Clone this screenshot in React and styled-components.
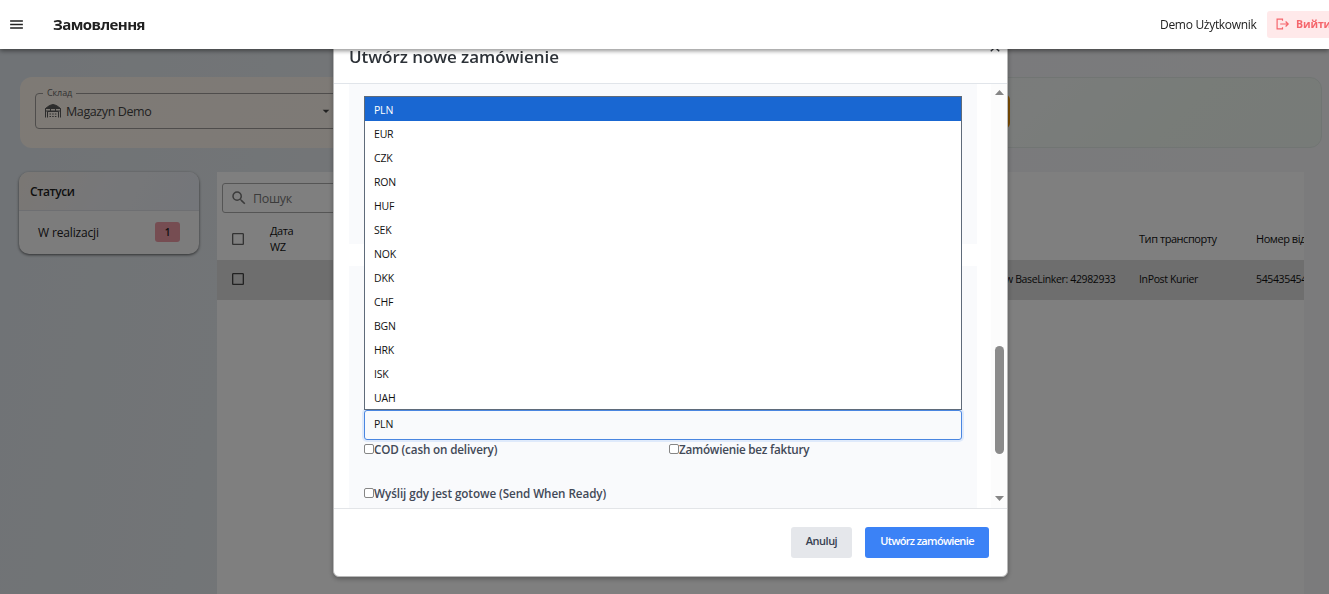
import React from "react";
import styled, { createGlobalStyle } from "styled-components";
import { MdMenu, MdSearch, MdArrowDropDown, MdCheckBoxOutlineBlank, MdClose } from "react-icons/md";

const GlobalStyle = createGlobalStyle`
  * { box-sizing: border-box; }
  svg { flex: none; }
  body {
    margin: 0;
    overflow: hidden;
    font-family: "Open Sans", "Noto Sans", sans-serif;
    color: #212121;
  }
`;

const Page = styled.div`
  height: 594px;
  display: flex;
  flex-direction: column;
  overflow: hidden;
  background: linear-gradient(100deg, #e0e6ec 0%, #e5eaee 20%, #f4f5f8 70%, #f7f7f9 100%);
`;

const TopBar = styled.header`
  height: 49px;
  flex: none;
  display: flex;
  align-items: center;
  padding-left: 8px;
  background: #fff;
  position: relative;
  z-index: 30;
  box-shadow: 0 2px 4px rgba(0, 0, 0, 0.3), 0 1px 6px rgba(0, 0, 0, 0.2);
`;

const PageTitle = styled.h1`
  flex: 1;
  margin: 0 0 2px 28px;
  font-size: 15px;
  font-weight: 700;
  letter-spacing: -0.55px;
`;

const UserName = styled.span`
  width: 107px;
  font-size: 12px;
  letter-spacing: -0.3px;
  white-space: nowrap;
`;

const LogoutButton = styled.button`
  width: 62px;
  height: 27px;
  display: flex;
  align-items: center;
  gap: 6px;
  padding: 0 0 2px 9px;
  border: 0;
  border-radius: 3px 0 0 3px;
  background: #ffe9ea;
  color: #f5666c;
  font: 700 10.5px "Open Sans", sans-serif;
  letter-spacing: -0.1px;
  white-space: nowrap;
  overflow: hidden;
`;

const Main = styled.main`
  flex: 1;
  min-height: 0;
  display: flex;
  flex-direction: column;
  padding: 28px 7px 0 20px;
`;

const Filters = styled.div`
  height: 71px;
  flex: none;
  display: flex;
  gap: 12px;
`;

const FilterCard = styled.div`
  flex: 1;
  padding: 16px 15px;
  border-radius: 12px;
  border: ${(p) => (p.$green ? "1px solid #e2eae6" : "0")};
  background: ${(p) =>
    p.$green
      ? "linear-gradient(135deg, #f5f6f8 0%, #f4f8f6 55%, #f0f8f1 75%, #eff6f0 100%)"
      : "linear-gradient(135deg, #fdf5eb, #faf4ee)"};
`;

const SelectField = styled.fieldset`
  height: 42px;
  margin: -6px 0 0;
  padding: 0 0 0 9px;
  border: 1px solid #9e9b98;
  border-radius: 4px;
  min-width: 0;
  legend {
    padding: 0 4px;
    margin-left: -2px;
    height: 12px;
    line-height: 12px;
    font-size: 9px;
    letter-spacing: -0.1px;
    color: #666;
  }
`;

const SelectValue = styled.div`
  display: flex;
  align-items: center;
  gap: 5px;
  width: 289px;
  height: 24px;
  font-size: 12.5px;
  letter-spacing: -0.4px;
  color: #444;
  span { flex: 1; }
`;

const OrangeButton = styled.div`
  width: 318px;
  height: 35px;
  border-radius: 6px;
  background: #f59a0a;
`;

const Columns = styled.div`
  flex: 1;
  min-height: 0;
  display: flex;
  align-items: flex-start;
  gap: 18px;
  padding-top: 24px;
`;

const StatusCard = styled.aside`
  width: 180px;
  height: 82px;
  margin-left: -1px;
  border-radius: 10px;
  overflow: hidden;
  background: #f8f8f9;
  box-shadow: 0 1px 3px rgba(0, 0, 0, 0.6);
`;

const StatusHead = styled.div`
  height: 39px;
  padding: 11px;
  line-height: 17px;
  font-size: 12px;
  font-weight: 600;
  letter-spacing: -0.4px;
  border-bottom: 1px solid #dcdfe4;
  background: linear-gradient(120deg, #f5efe8, #eeeff2 45%, #e8ecf4);
`;

const StatusRow = styled.div`
  display: flex;
  align-items: center;
  justify-content: space-between;
  height: 43px;
  padding: 0 19px;
  font-size: 12px;
  letter-spacing: -0.15px;
`;

const Badge = styled.span`
  width: 25px;
  height: 20px;
  margin-top: -2px;
  border-radius: 3px;
  background: #ec9aa5;
  text-align: center;
  font-size: 10px;
  font-weight: 600;
  line-height: 20px;
`;

const TablePanel = styled.section`
  width: 1087px;
  height: 422px;
  overflow: hidden;
  background: #fff;
`;

const SearchBox = styled.div`
  width: 300px;
  height: 30px;
  margin: 11px 0 4px 5px;
  display: flex;
  align-items: center;
  gap: 5px;
  padding-left: 7px;
  border: 1px solid #aaa;
  border-radius: 3px;
  font-size: 12.5px;
  letter-spacing: -0.3px;
  color: #777;
`;

const TableRow = styled.div`
  display: grid;
  grid-template-columns: 40px 735px 134px 117px 200px;
  align-items: center;
  height: ${(p) => (p.$head ? "43px" : "40px")};
  padding: 0 0 ${(p) => (p.$head ? 0 : 2)}px 13px;
  background: ${(p) => (p.$head ? "#fff" : "#dcdcdc")};
  font-size: ${(p) => (p.$head ? "11px" : "10.5px")};
  font-weight: ${(p) => (p.$head ? 500 : 400)};
  letter-spacing: ${(p) => (p.$head ? "-0.45px" : "-0.35px")};
  line-height: 16px;
  color: #111;
  white-space: nowrap;
`;

const Backdrop = styled.div`
  position: fixed;
  inset: 0;
  z-index: 10;
  background: rgba(0, 0, 0, 0.5);
`;

const Modal = styled.div`
  position: fixed;
  left: 333px;
  top: 30px;
  z-index: 20;
  width: 675px;
  height: 547px;
  display: flex;
  flex-direction: column;
  border: 1px solid #b8b8b8;
  border-radius: 6px;
  background: #fff;
  box-shadow: 0 2px 5px rgba(0, 0, 0, 0.3);
`;

const ModalHead = styled.div`
  height: 53px;
  flex: none;
  display: flex;
  justify-content: space-between;
  padding: 8px 4px 0 15px;
  border-bottom: 1px solid #e1e5ea;
  color: #2d3238;
  h2 {
    margin: 6px 0 0;
    font-size: 17px;
    line-height: 24px;
    font-weight: 600;
    letter-spacing: -0.05px;
  }
`;

const ModalBody = styled.div`
  flex: 1;
  min-height: 0;
  display: flex;
  justify-content: space-between;
`;

const Sections = styled.div`
  width: 628px;
  margin-left: 15px;
  display: flex;
  flex-direction: column;
  gap: 22px;
`;

const Section = styled.div`
  height: ${(p) => p.$height}px;
  padding: 0 15px;
  background: #f9fafc;
`;

const CurrencyField = styled.div`
  position: relative;
  height: 30px;
  margin-top: 144px;
  padding-left: 9px;
  border: 1px solid #4a86e0;
  border-radius: 3px;
  background: #f9fafc;
  box-shadow: 0 0 0 2px #dfeafb;
  font-size: 10.5px;
  letter-spacing: -0.2px;
  line-height: 27px;
  color: #111;
`;

const OptionList = styled.div`
  position: absolute;
  left: -1px;
  bottom: 29px;
  width: 598px;
  height: 314px;
  border: 1px solid #5f6b7a;
  background: #fff;
`;

const Option = styled.div`
  height: 24px;
  padding-left: 9px;
  line-height: 26px;
  background: ${(p) => (p.$active ? "#1967d2" : "transparent")};
  color: ${(p) => (p.$active ? "#fff" : "#111")};
`;

const Checks = styled.div`
  display: grid;
  grid-template-columns: 305px 1fr;
  row-gap: 26px;
`;

const CheckLabel = styled.label`
  display: flex;
  align-items: center;
  height: 18px;
  font-size: 11.7px;
  font-weight: 600;
  letter-spacing: ${(p) => p.$spacing || "-0.16px"};
  color: #424957;
  white-space: nowrap;
`;

const CheckBox = styled.span`
  width: 10px;
  height: 10px;
  margin-top: -1px;
  border: 1px solid #868686;
  border-radius: 2px;
  background: #fff;
`;

const ScrollBar = styled.div`
  width: 16px;
  display: flex;
  flex-direction: column;
  align-items: center;
  padding: 6px 0 7px;
  background: #fcfcfc;
`;

const ScrollThumb = styled.div`
  width: 9px;
  height: 108px;
  margin: 251px 0 auto;
  border-radius: 5px;
  background: #8b8b8b;
`;

const ModalFoot = styled.div`
  height: 68px;
  flex: none;
  display: flex;
  justify-content: flex-end;
  gap: 13px;
  padding: 18px 18px 0;
  border-top: 1px solid #e3e5e8;
`;

const FootButton = styled.button`
  width: ${(p) => (p.$primary ? 124 : 61)}px;
  height: 31px;
  padding: 0 0 4px;
  border: 0;
  border-radius: 3px;
  background: ${(p) => (p.$primary ? "#3b82f6" : "#e5e7eb")};
  color: ${(p) => (p.$primary ? "#fff" : "#374151")};
  font: 600 11px "Open Sans", sans-serif;
  letter-spacing: ${(p) => (p.$primary ? "-0.65px" : "-0.5px")};
  white-space: nowrap;
`;

const currencies = ["PLN", "EUR", "CZK", "RON", "HUF", "SEK", "NOK", "DKK", "CHF", "BGN", "HRK", "ISK", "UAH"];

function LogoutIcon() {
  return (
    <svg width="14" height="12" viewBox="0 0 14 12" fill="none" stroke="currentColor" strokeWidth="1.2">
      <path d="M6.500 2.800V1.100H1.100v9.800h5.400V9.200M4.200 6h8M9.600 3.500L12.200 6 9.600 8.500" />
    </svg>
  );
}

function WarehouseIcon() {
  return (
    <svg width="16" height="14" viewBox="0 0 16 14" fill="none" stroke="#5a5a5a" strokeWidth="1">
      <path d="M.5 13.500V4.500M15.500 4.500v9M2.500 13.500v-6h11v6" />
      <path d="M.5 4.500L4.500 1.500 8 .5l3.500 1 4 3z" fill="#5a5a5a" />
      <path d="M5.500 4v3M10.500 4v3M.5 7h15" />
      <path d="M4.500 10h7M4.500 12.500h7" strokeDasharray="1.500 1.200" />
    </svg>
  );
}

function Triangle({ down }) {
  return (
    <svg width="9" height="5" viewBox="0 0 9 5" fill="#868686">
      <path d={down ? "M0 0h9L4.500 5z" : "M0 5h9L4.500 0z"} />
    </svg>
  );
}

function OrderModal() {
  return (
    <Modal>
      <ModalHead>
        <h2>Utwórz nowe zamówienie</h2>
        <MdClose size={16} />
      </ModalHead>
      <ModalBody>
        <Sections>
          <Section $height={160} />
          <Section $height={242}>
            <CurrencyField>
              PLN
              <OptionList>
                {currencies.map((c, i) => (
                  <Option key={c} $active={i === 0}>{c}</Option>
                ))}
              </OptionList>
            </CurrencyField>
            <Checks>
              <CheckLabel><CheckBox />COD (cash on delivery)</CheckLabel>
              <CheckLabel $spacing="-0.23px"><CheckBox />Zamówienie bez faktury</CheckLabel>
              <CheckLabel $spacing="-0.08px"><CheckBox />Wyślij gdy jest gotowe (Send When Ready)</CheckLabel>
            </Checks>
          </Section>
        </Sections>
        <ScrollBar>
          <Triangle />
          <ScrollThumb />
          <Triangle down />
        </ScrollBar>
      </ModalBody>
      <ModalFoot>
        <FootButton>Anuluj</FootButton>
        <FootButton $primary>Utwórz zamówienie</FootButton>
      </ModalFoot>
    </Modal>
  );
}

export default function App() {
  return (
    <Page>
      <GlobalStyle />
      <TopBar>
        <MdMenu size={17} />
        <PageTitle>Замовлення</PageTitle>
        <UserName>Demo Użytkownik</UserName>
        <LogoutButton><LogoutIcon />Вийти</LogoutButton>
      </TopBar>
      <Main>
        <Filters>
          <FilterCard>
            <SelectField>
              <legend>Склад</legend>
              <SelectValue>
                <WarehouseIcon />
                <span>Magazyn Demo</span>
                <MdArrowDropDown size={16} />
              </SelectValue>
            </SelectField>
          </FilterCard>
          <FilterCard $green>
            <OrangeButton />
          </FilterCard>
        </Filters>
        <Columns>
          <StatusCard>
            <StatusHead>Статуси</StatusHead>
            <StatusRow>W realizacji<Badge>1</Badge></StatusRow>
          </StatusCard>
          <TablePanel>
            <SearchBox><MdSearch size={18} />Пошук</SearchBox>
            <TableRow $head>
              <MdCheckBoxOutlineBlank size={16} color="#666" />
              <span>Дата<br />WZ</span>
              <span />
              <span>Тип транспорту</span>
              <span>Номер відправлення</span>
            </TableRow>
            <TableRow>
              <MdCheckBoxOutlineBlank size={16} color="#444" />
              <span />
              <span>w BaseLinker: 42982933</span>
              <span>InPost Kurier</span>
              <span>54543545454</span>
            </TableRow>
          </TablePanel>
        </Columns>
      </Main>
      <Backdrop />
      <OrderModal />
    </Page>
  );
}
